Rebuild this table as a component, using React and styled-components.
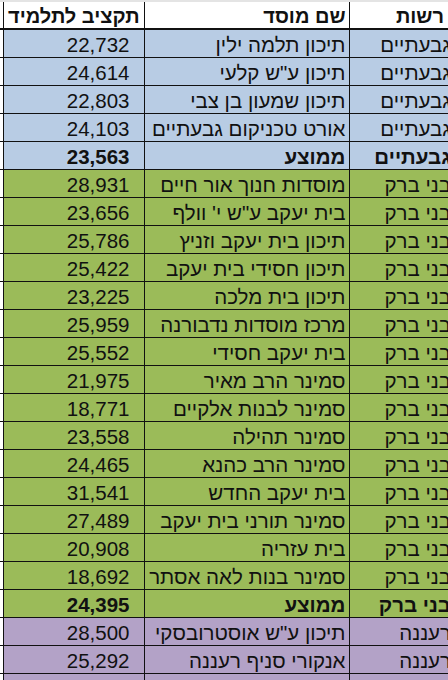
import React from "react";
import styled, { createGlobalStyle } from "styled-components";

const GlobalStyle = createGlobalStyle`
  html, body {
    margin: 0;
    padding: 0;
    background: #ffffff;
    overflow: hidden;
  }
`;

const tones = {
  head: "#ffffff",
  blue: "#b8cce4",
  green: "#9bbb59",
  purple: "#b3a2c7",
  blank: "#ffffff",
};

const Sheet = styled.div`
  width: 448px;
  height: 680px;
  overflow: hidden;
  direction: rtl;
  font-family: "Liberation Sans", Arial, sans-serif;
  color: #111111;
`;

const TopStrip = styled.div`
  height: 2px;
  background: #e4e4e4;
`;

const Grid = styled.table`
  border-collapse: collapse;
  table-layout: fixed;
  width: 481px;
  margin-right: -6px;
`;

const Col = styled.col`
  width: ${(p) => p.$w}px;
`;

const HeadCell = styled.th`
  height: 26px;
  padding: 0 ${(p) => p.$pad || 3}px 0 0;
  background: ${tones.head};
  border-left: 1px solid #111;
  border-bottom: 2px solid #111;
  font-size: 20px;
  font-weight: 700;
  text-align: right;
  vertical-align: bottom;
  line-height: 24px;
  white-space: nowrap;
  overflow: hidden;
`;

const Cell = styled.td`
  height: 27px;
  padding: 0 ${(p) => (p.$num ? 14 : 3)}px 0 0;
  background: ${(p) => tones[p.$tone]};
  border-left: 1px solid #111;
  border-bottom: 1px solid #111;
  font-size: 20.5px;
  font-weight: ${(p) => (p.$bold ? 700 : 400)};
  text-align: right;
  vertical-align: bottom;
  line-height: 24px;
  white-space: nowrap;
  overflow: hidden;
`;

const rows = [
  ["גבעתיים", "תיכון תלמה ילין", "22,732", "blue"],
  ["גבעתיים", 'תיכון ע"ש קלעי', "24,614", "blue"],
  ["גבעתיים", "תיכון שמעון בן צבי", "22,803", "blue"],
  ["גבעתיים", "אורט טכניקום גבעתיים", "24,103", "blue"],
  ["גבעתיים", "ממוצע", "23,563", "blue", true],
  ["בני ברק", "מוסדות חנוך אור חיים", "28,931", "green"],
  ["בני ברק", 'בית יעקב ע"ש י\' וולף', "23,656", "green"],
  ["בני ברק", "תיכון בית יעקב וזניץ", "25,786", "green"],
  ["בני ברק", "תיכון חסידי בית יעקב", "25,422", "green"],
  ["בני ברק", "תיכון בית מלכה", "23,225", "green"],
  ["בני ברק", "מרכז מוסדות נדבורנה", "25,959", "green"],
  ["בני ברק", "בית יעקב חסידי", "25,552", "green"],
  ["בני ברק", "סמינר הרב מאיר", "21,975", "green"],
  ["בני ברק", "סמינר לבנות אלקיים", "18,771", "green"],
  ["בני ברק", "סמינר תהילה", "23,558", "green"],
  ["בני ברק", "סמינר הרב כהנא", "24,465", "green"],
  ["בני ברק", "בית יעקב החדש", "31,541", "green"],
  ["בני ברק", "סמינר תורני בית יעקב", "27,489", "green"],
  ["בני ברק", "בית עזריה", "20,908", "green"],
  ["בני ברק", "סמינר בנות לאה אסתר", "18,692", "green"],
  ["בני ברק", "ממוצע", "24,395", "green", true],
  ["רעננה", 'תיכון ע"ש אוסטרובסקי', "28,500", "purple"],
  ["רעננה", "אנקורי סניף רעננה", "25,292", "purple"],
  ["רעננה", "אביב רעננה", "26,764", "purple"],
];

export default function App() {
  return (
    <>
      <GlobalStyle />
      <Sheet>
        <TopStrip />
        <Grid>
          <colgroup>
            <Col $w={105} />
            <Col $w={205} />
            <Col $w={141} />
            <Col $w={30} />
          </colgroup>
          <thead>
            <tr>
              <HeadCell $pad={10}>רשות</HeadCell>
              <HeadCell>שם מוסד</HeadCell>
              <HeadCell $pad={4}>תקציב לתלמיד</HeadCell>
              <HeadCell />
            </tr>
          </thead>
          <tbody>
            {rows.map(([city, name, budget, tone, bold], i) => (
              <tr key={i}>
                <Cell $tone={tone} $bold={bold}>{city}</Cell>
                <Cell $tone={tone} $bold={bold}>{name}</Cell>
                <Cell $tone={tone} $bold={bold} $num>{budget}</Cell>
                <Cell $tone="blank" />
              </tr>
            ))}
          </tbody>
        </Grid>
      </Sheet>
    </>
  );
}
